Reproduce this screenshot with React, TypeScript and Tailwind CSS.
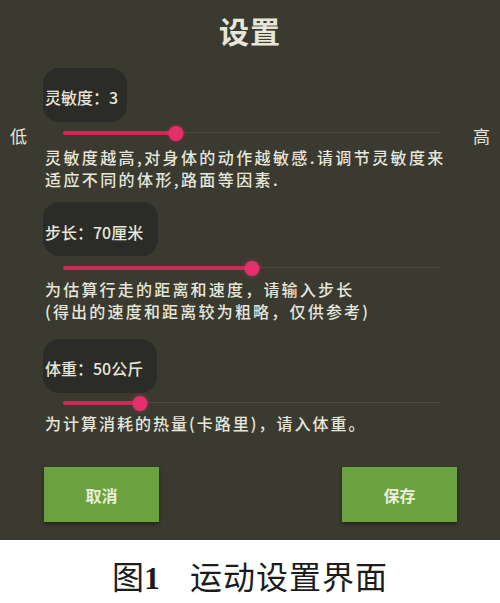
import React from "react";

type SliderProps = {
  fill: number;
  low?: boolean;
};

function Slider({ fill, low }: SliderProps) {
  return (
    <div className="flex h-[20px] items-center">
      <div className="w-[63px] pl-[10px] pt-[6px] text-[17px] leading-[20px]">
        {low ? "低" : ""}
      </div>
      <div className="relative h-[20px] w-[377px]">
        <div className="absolute left-0 right-0 top-[9px] h-[1px] bg-[#4b4b41]"></div>
        <div
          className="absolute left-0 top-[8px] h-[4px] rounded-full bg-[#cf2858]"
          style={{ width: fill }}
        ></div>
        <div
          className="absolute top-[3px] h-[15px] w-[15px] -translate-x-1/2 rounded-full bg-[#e3306a] shadow-[0_0_4px_rgba(227,48,106,0.6)]"
          style={{ left: fill }}
        ></div>
      </div>
      <div className="flex flex-1 justify-end pr-[10px] pt-[6px] text-[17px] leading-[20px]">
        {low ? "高" : ""}
      </div>
    </div>
  );
}

function LabelBox({ text, width, pt }: { text: string; width: string; pt: string }) {
  return (
    <div
      className={`ml-[43px] flex h-[54px] items-center rounded-[16px] bg-[#2b2b27] pl-[2px] text-[16px] font-medium leading-[20px] ${width} ${pt}`}
    >
      {text}
    </div>
  );
}

export default function App() {
  return (
    <div
      className="w-[500px] bg-white"
      style={{ fontFamily: '"Noto Sans CJK SC", "Noto Sans", sans-serif' }}
    >
      <div className="flex h-[540px] flex-col bg-[#3a3a31] text-[#e6e6da]">
        <h1 className="pt-[13px] text-center text-[30px] font-bold leading-[34px] tracking-[1px]">
          设置
        </h1>

        <div className="mt-[21px]">
          <LabelBox text="灵敏度：3" width="w-[84px]" pt="pt-[4px]" />
        </div>
        <div className="mt-[1px]">
          <Slider fill={113} low />
        </div>
        <p className="ml-[45px] mt-[3px] text-[16px] font-medium leading-[22px] tracking-[2.4px]">
          灵敏度越高,对身体的动作越敏感.请调节灵敏度来
          <br />
          适应不同的体形,路面等因素.
        </p>

        <div className="mt-[12px]">
          <LabelBox text="步长：70厘米" width="w-[115px]" pt="pt-[6px]" />
        </div>
        <div className="mt-[2px]">
          <Slider fill={189} />
        </div>
        <p className="ml-[45px] text-[16px] font-medium leading-[22px] tracking-[2.2px]">
          为估算行走的距离和速度，请输入步长
          <br />
          (得出的速度和距离较为粗略，仅供参考)
        </p>

        <div className="mt-[17px]">
          <LabelBox text="体重：50公斤" width="w-[114px]" pt="pt-[4px]" />
        </div>
        <div>
          <Slider fill={77} />
        </div>
        <p className="ml-[45px] text-[16px] font-medium leading-[21px] tracking-[2px]">
          为计算消耗的热量(卡路里)，请入体重。
        </p>

        <div className="mt-[33px] flex justify-between pl-[44px] pr-[43px]">
          <button className="flex h-[55px] w-[115px] items-center justify-center bg-[#6ba13e] text-[16px] font-bold text-[#e8f0d8] shadow-[0_2px_4px_rgba(0,0,0,0.4)]">
            取消
          </button>
          <button className="flex h-[55px] w-[115px] items-center justify-center bg-[#6ba13e] text-[16px] font-bold text-[#e8f0d8] shadow-[0_2px_4px_rgba(0,0,0,0.4)]">
            保存
          </button>
        </div>
      </div>

      <div
        className="flex h-[63px] items-center justify-center pt-[12px] text-[32px] leading-[40px] text-[#1c1c1c]"
        style={{ fontFamily: '"Liberation Serif", "Noto Sans CJK SC", serif' }}
      >
        <span>图</span>
        <span className="font-bold">1</span>
        <span className="ml-[30px] tracking-[1px]">运动设置界面</span>
      </div>
    </div>
  );
}
